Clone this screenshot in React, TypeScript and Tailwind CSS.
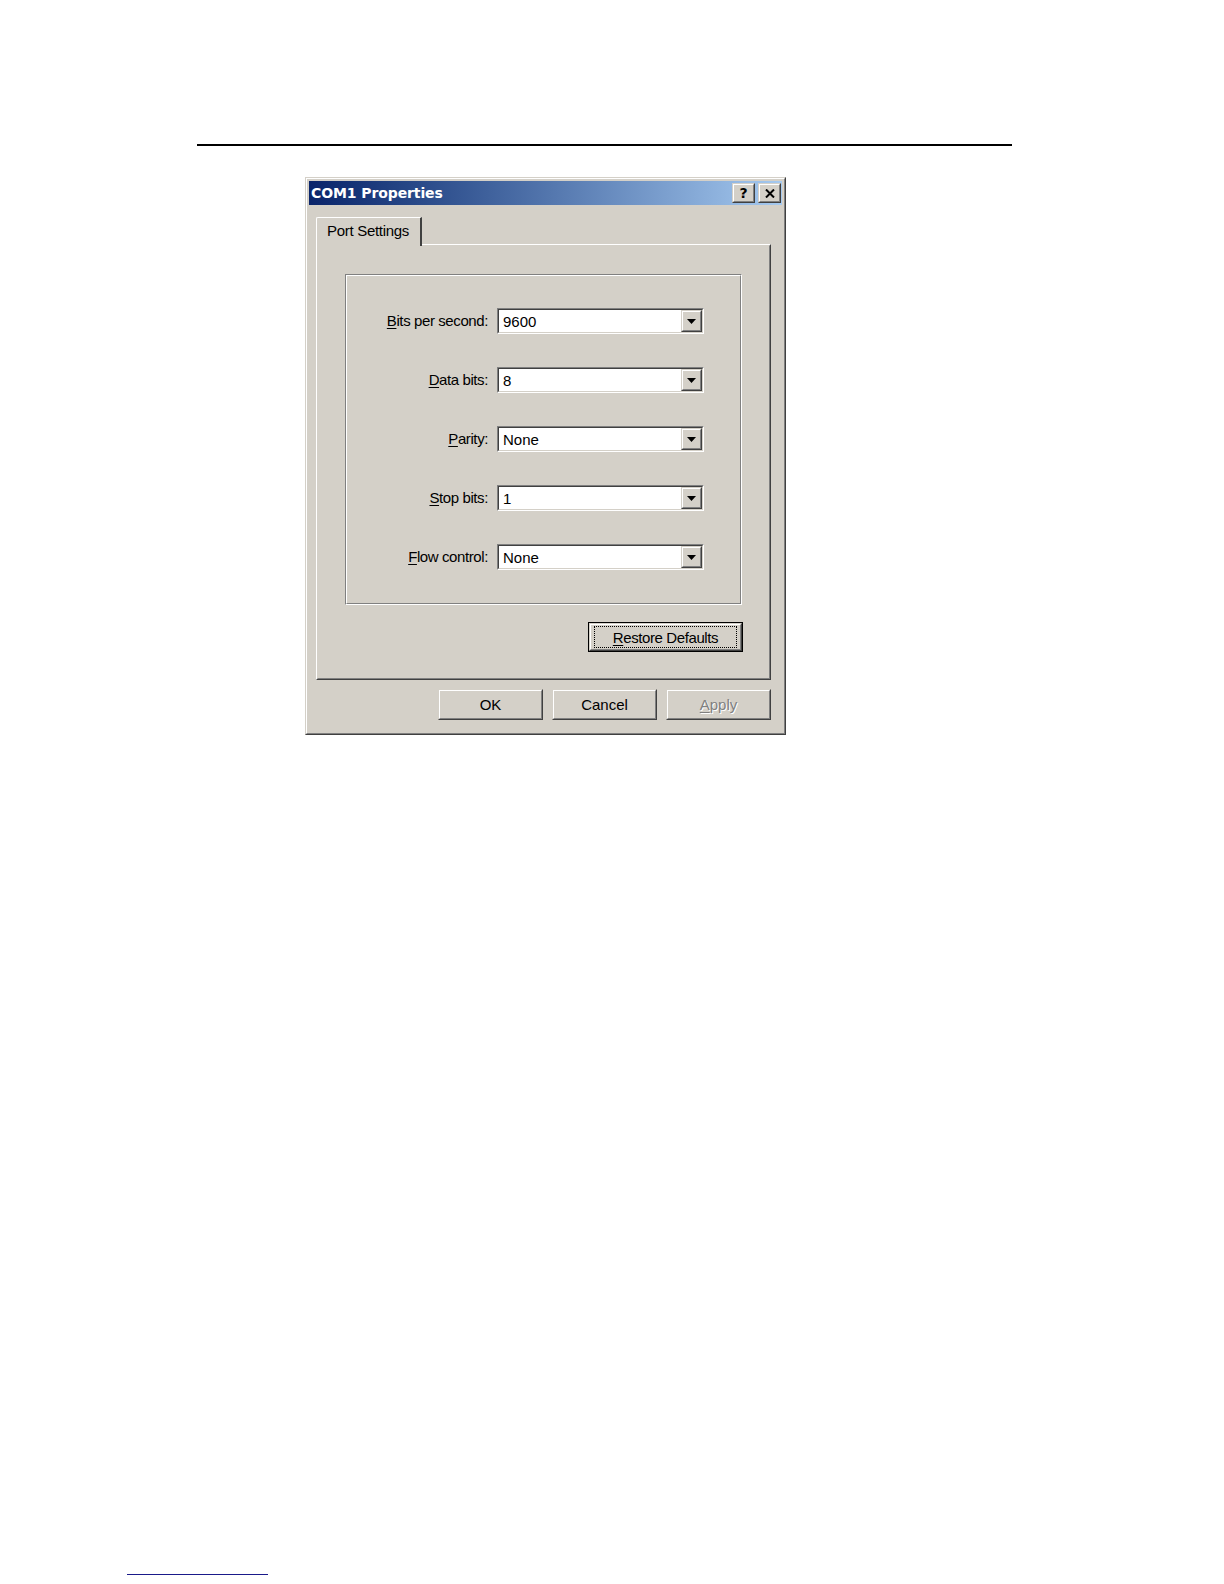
import React from "react"

const ui = "font-['Liberation_Sans',Arial,sans-serif]"

// Win2000 style raised bevel (buttons)
function Raised({ className = "", children }: { className?: string; children?: React.ReactNode }) {
  return (
    <div
      className={`border border-t-[#d4d0c8] border-l-[#d4d0c8] border-r-[#404040] border-b-[#404040] bg-[#d4d0c8] ${className}`}
    >
      <div className="w-full h-full border border-t-white border-l-white border-r-[#808080] border-b-[#808080] flex items-center justify-center">
        {children}
      </div>
    </div>
  )
}

function Combo({ value }: { value: string }) {
  return (
    <div className="w-[207px] h-[26px] border border-t-[#808080] border-l-[#808080] border-r-white border-b-white">
      <div className="w-full h-full border border-t-[#404040] border-l-[#404040] border-r-[#d4d0c8] border-b-[#d4d0c8] bg-white flex items-center">
        <span className={`${ui} flex-1 pl-[4px] text-[15px] text-black leading-none`}>{value}</span>
        <Raised className="w-[21px] h-[22px]">
          <svg width="9" height="5" viewBox="0 0 9 5">
            <path d="M0 0h9L4.5 5z" fill="#000" />
          </svg>
        </Raised>
      </div>
    </div>
  )
}

const rows: { key: string; rest: string; value: string }[] = [
  { key: "B", rest: "its per second:", value: "9600" },
  { key: "D", rest: "ata bits:", value: "8" },
  { key: "P", rest: "arity:", value: "None" },
  { key: "S", rest: "top bits:", value: "1" },
  { key: "F", rest: "low control:", value: "None" },
]

export default function App() {
  return (
    <div className="w-[1224px] h-[1584px] bg-white overflow-hidden">
      <div className="pt-[144px]">
        <div className="ml-[197px] w-[815px] h-[2px] bg-black" />
      </div>

      {/* dialog */}
      <div className="mt-[31px] ml-[305px] w-[481px] h-[558px] border border-t-[#d4d0c8] border-l-[#d4d0c8] border-r-[#404040] border-b-[#404040] bg-[#d4d0c8]">
        <div className="w-full h-full border border-t-white border-l-white border-r-[#808080] border-b-[#808080] p-[2px]">
          {/* title bar */}
          <div className="h-[24px] bg-linear-to-r from-[#0a246a] to-[#a6caf0] flex items-center justify-between pl-[2px] pr-[1px]">
            <span className="font-['DejaVu_Sans',Tahoma,sans-serif] font-bold text-[14px] tracking-[-0.1px] text-white leading-none">
              COM1 Properties
            </span>
            <div className="flex gap-[3px]">
              <Raised className="w-[23px] h-[20px]">
                <span className="font-['DejaVu_Sans',sans-serif] font-bold text-[14px] leading-none text-black">?</span>
              </Raised>
              <Raised className="w-[23px] h-[20px]">
                <svg width="10" height="9" viewBox="0 0 10 9">
                  <path d="M1 0.5L9 8.5M9 0.5L1 8.5" stroke="#000" strokeWidth="2" />
                </svg>
              </Raised>
            </div>
          </div>

          <div className="px-[7px] pt-[12px]">
            {/* tab */}
            <div className="relative z-10 -mb-[2px] w-[106px] h-[29px] bg-[#d4d0c8] border-l border-t border-white rounded-tl-[2px] border-r-2 border-r-[#404040] flex items-start pt-[4px] pl-[10px]">
              <span className={`${ui} text-[15px] tracking-[-0.3px] text-black leading-[18px]`}>Port Settings</span>
            </div>

            {/* panel */}
            <div className="w-[455px] h-[436px] border border-t-white border-l-white border-r-[#404040] border-b-[#404040]">
              <div className="w-full h-full border border-t-[#d4d0c8] border-l-[#d4d0c8] border-r-[#808080] border-b-[#808080] px-[27px] pt-[28px]">
                {/* group box */}
                <div className="w-[397px] h-[331px] border border-t-[#808080] border-l-[#808080] border-r-white border-b-white">
                  <div className="w-full h-full border border-t-white border-l-white border-r-[#808080] border-b-[#808080] pt-[32px] flex flex-col gap-[33px]">
                    {rows.map((r) => (
                      <div key={r.key} className="flex items-center h-[26px]">
                        <div className={`${ui} w-[141px] text-right text-[15px] tracking-[-0.4px] text-black`}>
                          <span className="underline underline-offset-2">{r.key}</span>
                          {r.rest}
                        </div>
                        <div className="ml-[9px]">
                          <Combo value={r.value} />
                        </div>
                      </div>
                    ))}
                  </div>
                </div>

                <div className="flex justify-end mt-[17px] -mr-[1px]">
                  <div className="w-[155px] h-[30px] border border-black">
                    <Raised className="w-full h-full">
                      <div className="w-[143px] h-[22px] border border-dotted border-black flex items-center justify-center">
                        <span className={`${ui} text-[15px] tracking-[-0.4px] text-black leading-none`}>
                          <span className="underline underline-offset-2">R</span>estore Defaults
                        </span>
                      </div>
                    </Raised>
                  </div>
                </div>
              </div>
            </div>

            {/* buttons */}
            <div className="flex justify-end gap-[9px] mt-[9px] w-[455px]">
              <Raised className="w-[105px] h-[31px]">
                <span className={`${ui} text-[15px] text-black leading-none`}>OK</span>
              </Raised>
              <Raised className="w-[105px] h-[31px]">
                <span className={`${ui} text-[15px] text-black leading-none`}>Cancel</span>
              </Raised>
              <Raised className="w-[105px] h-[31px]">
                <span className={`${ui} text-[15px] text-[#808080] leading-none [text-shadow:1px_1px_0_#fff]`}>
                  <span className="underline underline-offset-2">A</span>pply
                </span>
              </Raised>
            </div>
          </div>
        </div>
      </div>

      <div className="mt-[839px] ml-[127px] w-[141px] h-[1px] bg-[#1a1a8a]" />
    </div>
  )
}
